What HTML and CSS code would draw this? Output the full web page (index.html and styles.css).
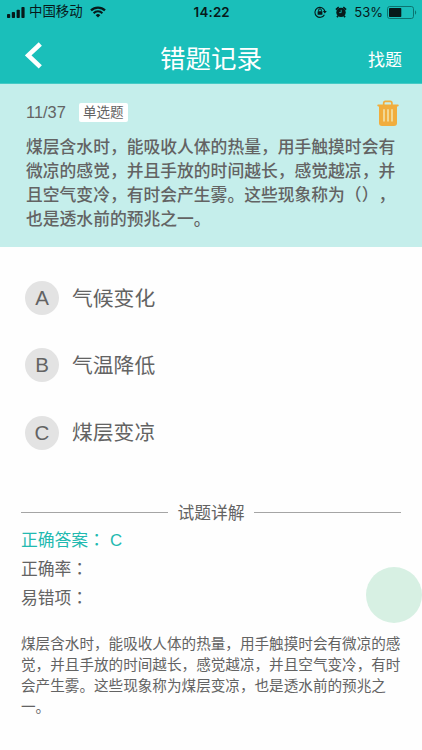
FILE: index.html
```html
<!DOCTYPE html>
<html lang="zh-CN">
<head>
<meta charset="utf-8">
<title>错题记录</title>
<link rel="stylesheet" href="styles.css">
</head>
<body>
<header class="header">
  <div class="status">
    <svg class="signal" width="18" height="11" viewBox="0 0 18 11"><rect x="0" y="7" width="3.2" height="4" rx=".8"/><rect x="4.8" y="5" width="3.2" height="6" rx=".8"/><rect x="9.6" y="2.7" width="3.2" height="8.3" rx=".8"/><rect x="14.4" y="0" width="3.2" height="11" rx=".8"/></svg>
    <span class="carrier">中国移动</span>
    <svg class="wifi" width="16" height="12" viewBox="0 0 16 12"><path d="M1 4.4A10 10 0 0 1 15 4.4" fill="none" stroke="#07191a" stroke-width="2.2"/><path d="M3.6 7.2A6.2 6.2 0 0 1 12.4 7.2" fill="none" stroke="#07191a" stroke-width="2"/><path d="M5.7 9.2A3.3 3.3 0 0 1 10.3 9.2L8 11.6Z"/></svg>
    <span class="time">14:22</span>
    <div class="status-right">
      <svg width="13" height="12" viewBox="0 0 13 12"><path d="M10.4 8.7A5 5 0 1 1 10.8 5" fill="none" stroke="#07191a" stroke-width="1.1"/><path d="M8.8 5h4L10.8 7.6Z"/><rect x="3.6" y="5.2" width="4.8" height="3.6" rx=".4"/><path d="M4.6 5.4V4.2a1.4 1.4 0 0 1 2.8 0V5.4" fill="none" stroke="#07191a"/></svg>
      <svg class="alarm" width="12" height="12" viewBox="0 0 12 12"><circle cx="6" cy="6.4" r="4.7"/><path d="M.9 3.7 3.7 1.2M11.1 3.7 8.3 1.2M3 9.8 2 11.3M9 9.8l1 1.5" stroke="#07191a" stroke-width="1.6"/><path d="M6.2 3.8V6.6H4.2" fill="none" stroke="#1abfba" stroke-width=".8"/></svg>
      <span class="percent">53%</span>
      <svg width="30" height="13" viewBox="0 0 30 13"><rect x=".5" y=".5" width="26" height="12" rx="2.2" fill="none" stroke="#0b7470"/><rect x="2" y="2" width="12.3" height="9" rx=".8"/><path d="M28 4.3c1.6.7 1.6 3.7 0 4.4Z" fill="#0b7470"/></svg>
    </div>
  </div>
  <nav class="nav">
    <svg class="back" width="18" height="27" viewBox="0 0 18 27"><path d="M15.3 2 3.2 13.4 15.3 24.8" fill="none" stroke="#fff" stroke-width="4.6"/></svg>
    <h1 class="title">错题记录</h1>
    <span class="find">找题</span>
  </nav>
</header>
<section class="question">
  <div class="meta">
    <span class="count">11/37</span>
    <span class="tag">单选题</span>
    <svg class="trash" width="22" height="26" viewBox="0 0 22 26"><path d="M6.7 5V3.1Q6.7 1.4 8.4 1.4H13.2Q14.9 1.4 14.9 3.1V5" fill="none" stroke="#f1ad3d" stroke-width="1.7"/><rect x=".3" y="4.4" width="21.4" height="2" rx=".8" fill="#f1ad3d"/><path d="M2 5.5H20V23Q20 26 17 26H5Q2 26 2 23Z" fill="#f1ad3d"/><path d="M7 9.3V21.6M11 9.3V21.6M15 9.3V21.6" stroke="#f3dfa2" stroke-width="1.7"/></svg>
  </div>
  <p class="stem">煤层含水时，能吸收人体的热量，用手触摸时会有<br>微凉的感觉，并且手放的时间越长，感觉越凉，并<br>且空气变冷，有时会产生雾。这些现象称为（），<br>也是透水前的预兆之一。</p>
</section>
<ul class="options">
  <li class="option"><span class="letter">A</span><span class="text">气候变化</span></li>
  <li class="option"><span class="letter">B</span><span class="text">气温降低</span></li>
  <li class="option"><span class="letter">C</span><span class="text">煤层变凉</span></li>
</ul>
<section class="detail">
  <h2 class="divider">试题详解</h2>
  <div class="row answer">正确答案<span class="colon" lang="zh-TW">：</span><span class="value">C</span></div>
  <div class="row">正确率<span class="colon" lang="zh-TW">：</span></div>
  <div class="row">易错项<span class="colon" lang="zh-TW">：</span></div>
  <p class="explain">煤层含水时，能吸收人体的热量，用手触摸时会有微凉的感<br>觉，并且手放的时间越长，感觉越凉，并且空气变冷，有时<br>会产生雾。这些现象称为煤层变凉，也是透水前的预兆之<br>一。</p>
</section>
<div class="float"></div>
</body>
</html>
```
FILE: styles.css
```css
* { box-sizing: border-box; }
body {
  margin: 0;
  height: 750px;
  overflow: hidden;
  background: #fefefe;
  color: #636363;
  font-family: "Liberation Sans", "Noto Sans CJK SC", sans-serif;
  text-spacing-trim: space-all;
}
svg { display: block; flex: none; }
.header { height: 84px; background: #1abfba; border-bottom: 1px solid #45cac5; }
.status {
  display: flex;
  align-items: center;
  height: 24px;
  padding: 0 5px 0 7px;
  color: #07191a;
  fill: #07191a;
  line-height: 24px;
}
.carrier { margin-left: 4px; font-size: 13.4px; }
.wifi { margin-left: 7px; margin-top: -1px; }
.time { margin-left: 88px; font: 600 13.3px/24px Inter, sans-serif; letter-spacing: .2px; }
.status-right { display: flex; align-items: center; margin-left: auto; }
.alarm { margin-left: 8px; }
.percent { margin: 0 4px 0 7px; font: 13px/24px Inter, sans-serif; }
.nav {
  display: grid;
  grid-template-columns: 1fr auto 1fr;
  align-items: center;
  height: 60px;
  padding: 9px 20px 0 25px;
  color: #fff;
}
.back { margin-top: -7px; }
.title { margin: 0 5px 0 0; font-size: 25.5px; font-weight: 400; line-height: 50px; }
.find { justify-self: end; font-size: 17px; }
.question { height: 163px; padding: 16px 20px 0 26px; background: #c5eeeb; }
.meta { display: flex; align-items: center; height: 26px; }
.count { margin-top: -2px; font-size: 16.4px; }
.tag {
  margin: -2px 0 0 13px;
  width: 49px;
  height: 19px;
  background: #fff;
  border-radius: 2px;
  font-size: 13.5px;
  line-height: 19px;
  text-align: center;
}
.trash { margin-left: auto; margin-right: 3px; }
.stem {
  margin: 10px 0 0;
  font-size: 16.8px;
  font-weight: 500;
  line-height: 24px;
  white-space: nowrap;
}
.options { margin: 0; padding: 34px 0 0 25px; list-style: none; height: 250px; }
.option { display: flex; align-items: center; height: 34px; margin-bottom: 33.3px; font-size: 20.8px; }
.letter {
  width: 34px;
  height: 34px;
  margin-right: 13px;
  border-radius: 50%;
  background: #e3e3e3;
  font-size: 20.5px;
  line-height: 34px;
  text-align: center;
}
.text { margin-top: -3px; }
.detail { padding: 0 21px; }
.divider {
  display: flex;
  align-items: center;
  gap: 9px;
  height: 29px;
  margin: 0;
  font-size: 16.8px;
  font-weight: 400;
}
.divider::before, .divider::after { content: ""; flex: 1; height: 1px; margin-top: 1px; background: #a5a5a5; }
.row { position: relative; top: -1px; height: 29px; font-size: 16.8px; line-height: 29px; }
.answer { color: #22b9b0; }
.colon { font-family: "Noto Sans CJK TC", sans-serif; }
.value { margin-left: 5px; }
.explain {
  margin: 21px 0 0;
  font-size: 14.6px;
  line-height: 21px;
  white-space: nowrap;
}
.float {
  position: absolute;
  left: 366px;
  top: 567px;
  width: 56px;
  height: 56px;
  border-radius: 50%;
  background: #d7f0e3;
}
```
